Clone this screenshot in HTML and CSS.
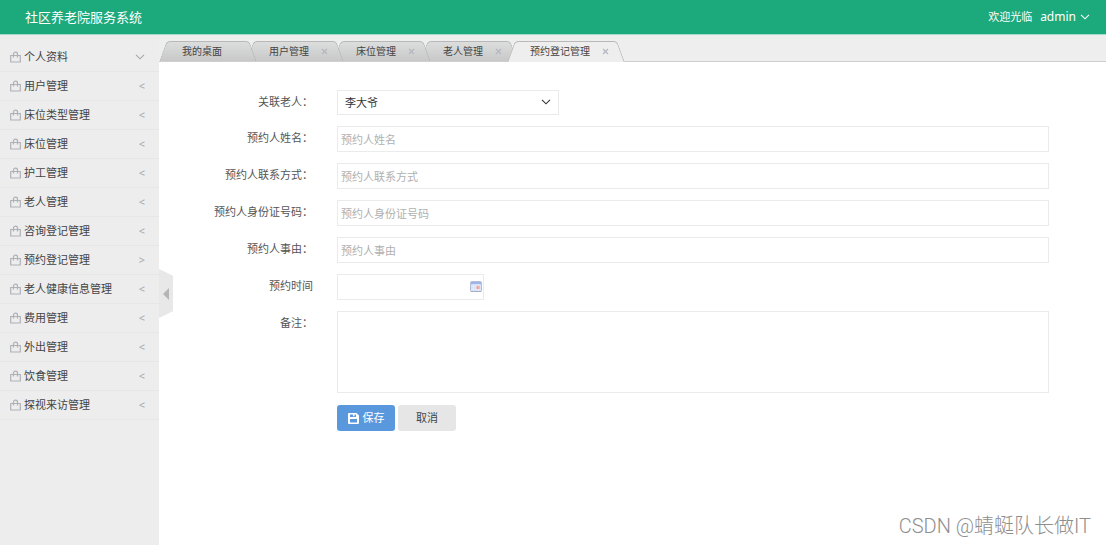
FILE: index.html
```html
<!DOCTYPE html>
<html lang="zh-CN">
<head>
<meta charset="utf-8">
<title>社区养老院服务系统</title>
<link rel="stylesheet" href="styles.css">
</head>
<body>
<svg class="defs" aria-hidden="true">
  <symbol id="bag" viewBox="0 0 11 12"><path d="M.7 4.500h9.600v6.500H.7zM3.500 6.500V3c0-2.500 4-2.500 4 0v3.500" fill="none" stroke="currentColor" stroke-width="1.200"/></symbol>
  <symbol id="down" viewBox="0 0 10 6"><path d="M1 .8l4 4 4-4" fill="none" stroke="currentColor" stroke-width="1.100"/></symbol>
</svg>
<header class="header">
  <h1 class="brand">社区养老院服务系统</h1>
  <div class="user"><span>欢迎光临</span><button class="user-menu" type="button">admin <svg class="down"><use href="#down"/></svg></button></div>
</header>
<div class="workspace">
  <aside class="sidebar">
    <nav class="menu">
      <a class="menu-item" href="#"><svg class="bag"><use href="#bag"/></svg><span class="menu-name">个人资料</span><svg class="down"><use href="#down"/></svg></a>
      <a class="menu-item" href="#"><svg class="bag"><use href="#bag"/></svg><span class="menu-name">用户管理</span><span class="arrow">&lt;</span></a>
      <a class="menu-item" href="#"><svg class="bag"><use href="#bag"/></svg><span class="menu-name">床位类型管理</span><span class="arrow">&lt;</span></a>
      <a class="menu-item" href="#"><svg class="bag"><use href="#bag"/></svg><span class="menu-name">床位管理</span><span class="arrow">&lt;</span></a>
      <a class="menu-item" href="#"><svg class="bag"><use href="#bag"/></svg><span class="menu-name">护工管理</span><span class="arrow">&lt;</span></a>
      <a class="menu-item" href="#"><svg class="bag"><use href="#bag"/></svg><span class="menu-name">老人管理</span><span class="arrow">&lt;</span></a>
      <a class="menu-item" href="#"><svg class="bag"><use href="#bag"/></svg><span class="menu-name">咨询登记管理</span><span class="arrow">&lt;</span></a>
      <a class="menu-item" href="#"><svg class="bag"><use href="#bag"/></svg><span class="menu-name">预约登记管理</span><span class="arrow">&gt;</span></a>
      <a class="menu-item" href="#"><svg class="bag"><use href="#bag"/></svg><span class="menu-name">老人健康信息管理</span><span class="arrow">&lt;</span></a>
      <a class="menu-item" href="#"><svg class="bag"><use href="#bag"/></svg><span class="menu-name">费用管理</span><span class="arrow">&lt;</span></a>
      <a class="menu-item" href="#"><svg class="bag"><use href="#bag"/></svg><span class="menu-name">外出管理</span><span class="arrow">&lt;</span></a>
      <a class="menu-item" href="#"><svg class="bag"><use href="#bag"/></svg><span class="menu-name">饮食管理</span><span class="arrow">&lt;</span></a>
      <a class="menu-item" href="#"><svg class="bag"><use href="#bag"/></svg><span class="menu-name">探视来访管理</span><span class="arrow">&lt;</span></a>
    </nav>
    <button class="collapse" type="button" aria-label="收起菜单"><svg class="collapse-icon" viewBox="0 0 6 12"><path d="M6 0v12L0 6z" fill="#b5b5b5"/></svg></button>
  </aside>
  <main class="main">
    <div class="tabs">
      <div class="tab"><a class="tab-name" href="#">我的桌面</a></div>
      <div class="tab"><a class="tab-name" href="#">用户管理</a><button class="close" type="button" aria-label="关闭"><svg class="close-icon" viewBox="0 0 7 7"><path d="M1 1l5 5M6 1L1 6" stroke="currentColor" stroke-width="1.300"/></svg></button></div>
      <div class="tab"><a class="tab-name" href="#">床位管理</a><button class="close" type="button" aria-label="关闭"><svg class="close-icon" viewBox="0 0 7 7"><path d="M1 1l5 5M6 1L1 6" stroke="currentColor" stroke-width="1.300"/></svg></button></div>
      <div class="tab"><a class="tab-name" href="#">老人管理</a><button class="close" type="button" aria-label="关闭"><svg class="close-icon" viewBox="0 0 7 7"><path d="M1 1l5 5M6 1L1 6" stroke="currentColor" stroke-width="1.300"/></svg></button></div>
      <div class="tab active"><a class="tab-name" href="#">预约登记管理</a><button class="close" type="button" aria-label="关闭"><svg class="close-icon" viewBox="0 0 7 7"><path d="M1 1l5 5M6 1L1 6" stroke="currentColor" stroke-width="1.300"/></svg></button></div>
    </div>
    <form class="form">
      <label class="label" for="elder">关联老人：</label>
      <div class="select-box"><select class="control" id="elder"><option>李大爷</option></select><svg class="down"><use href="#down"/></svg></div>
      <label class="label" for="name">预约人姓名：</label>
      <input class="control" id="name" type="text" placeholder="预约人姓名">
      <label class="label" for="phone">预约人联系方式：</label>
      <input class="control" id="phone" type="text" placeholder="预约人联系方式">
      <label class="label" for="idno">预约人身份证号码：</label>
      <input class="control" id="idno" type="text" placeholder="预约人身份证号码">
      <label class="label" for="reason">预约人事由：</label>
      <input class="control" id="reason" type="text" placeholder="预约人事由">
      <label class="label" for="time">预约时间</label>
      <div class="date-box"><input class="control" id="time" type="text"><svg class="calendar" viewBox="0 0 12 11"><rect x=".5" y=".5" width="11" height="10" rx="1" fill="#d3ddf5" stroke="#b3bdd6"/><path d="M1 1h10v2H1z" fill="#9db5e6"/><path d="M1 5.500h10M1 8h10M3.500 3v7M6 3v7M8.500 3v7" stroke="#f0f4fd" stroke-width=".6"/><path d="M6.500 5h3v3h-3z" fill="#f0a79a"/><path d="M1 10.500h10" stroke="#a9afbd"/></svg></div>
      <label class="label" for="remark">备注：</label>
      <textarea class="control remark" id="remark"></textarea>
      <div class="actions">
        <button class="button save" type="submit"><svg class="disk" viewBox="0 0 11 11"><path fill="#fff" fill-rule="evenodd" d="M1 0h7.500L11 2.500V10a1 1 0 0 1-1 1H1a1 1 0 0 1-1-1V1a1 1 0 0 1 1-1zM2 1.500V4h6V1.500H6.500v1.800H5V1.500zM2 6v3.500h7V6z"/></svg>保存</button>
        <button class="button" type="button">取消</button>
      </div>
    </form>
  </main>
</div>
<div class="watermark">CSDN @蜻蜓队长做IT</div>
</body>
</html>
```
FILE: styles.css
```css
* { box-sizing: border-box; }
body {
  margin: 0;
  min-height: 100vh;
  display: flex;
  flex-direction: column;
  background: #fff;
  color: #444;
  font: 11px/16px "Noto Sans", "Noto Sans CJK SC", sans-serif;
}
a { color: inherit; text-decoration: none; }
button { border: 0; padding: 0; background: none; color: inherit; font: inherit; }
.defs { position: absolute; width: 0; height: 0; }
.down { width: 10px; height: 6px; flex: none; }

.header {
  display: flex;
  align-items: center;
  justify-content: space-between;
  height: 35px;
  padding: 0 16px 0 25px;
  border-bottom: 1px solid #a5d9c7;
  background: #1ca97c;
  color: #fff;
}
.brand { margin: 0; font-size: 13px; font-weight: 400; }
.user { display: flex; align-items: center; gap: 8px; }
.user-menu { display: flex; align-items: center; gap: 4px; font-size: 12px; }

.workspace { display: flex; flex: 1; }
.sidebar {
  position: relative;
  flex: none;
  width: 159px;
  padding-top: 8px;
  background: #ededed;
}
.menu-item {
  display: flex;
  align-items: center;
  height: 29px;
  padding: 0 14px 0 10px;
  border-bottom: 1px solid #e6e6e6;
}
.bag { width: 11px; height: 12px; margin-right: 3px; color: #aeb1b8; }
.menu-name { flex: 1; }
.menu-item .down, .arrow { color: #a8a8a8; }
.collapse {
  position: absolute;
  left: 100%;
  top: 234px;
  width: 14px;
  height: 49px;
  display: flex;
  align-items: center;
  justify-content: center;
  background: #e8e8e8;
  clip-path: polygon(0 0, 100% 14%, 100% 86%, 0 100%);
}
.collapse-icon { width: 6px; height: 12px; }

.main { flex: 1; min-width: 0; }
.tabs {
  display: flex;
  align-items: flex-end;
  height: 27px;
  border-bottom: 1px solid #cfcfcf;
  background: #eeeeef;
}
.tab {
  position: relative;
  isolation: isolate;
  display: flex;
  align-items: center;
  gap: 12px;
  min-width: 98px;
  height: 20px;
  padding: 0 16px 0 23px;
  font-size: 10px;
}
.tab + .tab { margin-left: -11px; }
.tab:nth-child(1) { z-index: 4; }
.tab:nth-child(2) { z-index: 3; }
.tab:nth-child(3) { z-index: 2; }
.tab:nth-child(4) { z-index: 1; }
.tab.active { z-index: 5; height: 21px; margin-bottom: -1px; padding-bottom: 1px; }
.tab::before, .tab::after {
  content: "";
  position: absolute;
  z-index: -1;
  top: 0;
  bottom: 0;
  border: 1px solid #b8b8b8;
  border-bottom: 0;
  background: linear-gradient(#dcdddd, #c8c8c9);
}
.tab::before { left: 4px; right: 45%; border-right: 0; border-top-left-radius: 4px; transform: skewX(-20deg); }
.tab::after { right: 4px; left: 45%; border-left: 0; border-top-right-radius: 4px; transform: skewX(20deg); }
.tab.active::before, .tab.active::after { background: #eeeeef; }
.close { display: flex; color: #b4b8c2; }
.close-icon { width: 7px; height: 7px; }

.form {
  display: grid;
  grid-template-columns: 154px 1fr;
  gap: 11px 24px;
  padding: 28px 57px 24px 0;
}
.label { text-align: right; line-height: 24px; color: #555; }
.control {
  display: block;
  width: 100%;
  height: 26px;
  margin: 0;
  padding: 0 3px;
  border: 1px solid #ebebeb;
  border-radius: 0;
  background: #fff;
  color: #333;
  font: inherit;
}
.control::placeholder { color: #b0b0b0; opacity: 1; }
.select-box, .date-box { position: relative; }
.select-box { width: 222px; }
.select-box .control { height: 25px; padding: 0 7px; appearance: none; }
.select-box .down { position: absolute; right: 8px; top: 9px; color: #333; }
.date-box { width: 147px; }
.calendar { position: absolute; right: 2px; top: 7px; width: 12px; height: 11px; }
.remark { height: 82px; resize: none; }
.actions { grid-column: 2; display: flex; gap: 3px; padding-top: 1px; }
.button {
  display: flex;
  align-items: center;
  justify-content: center;
  gap: 4px;
  width: 58px;
  height: 26px;
  border-radius: 3px;
  background: #e6e6e6;
}
.save { background: #5a98de; color: #fff; }
.disk { width: 11px; height: 11px; }

.watermark {
  position: absolute;
  right: 15px;
  bottom: 6px;
  color: #8e8e8e;
  font: 300 20px/26px Roboto, "Noto Sans CJK SC", sans-serif;
}
```
